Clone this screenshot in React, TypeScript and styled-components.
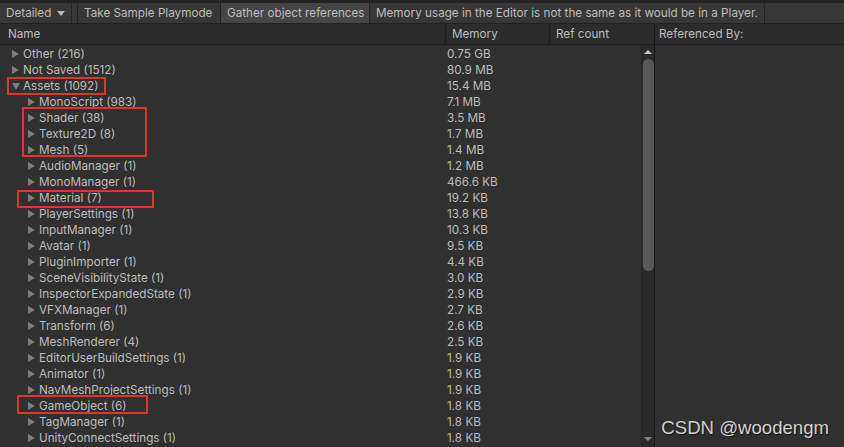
import React from "react";
import styled, { createGlobalStyle } from "styled-components";

const Global = createGlobalStyle`
  html, body { margin: 0; padding: 0; background: #303030; }
  body { font-family: Inter, "Noto Sans", sans-serif; overflow: hidden; }
  #root { width: 844px; height: 447px; }
`;

const Page = styled.div`
  position: relative;
  width: 844px;
  height: 447px;
  display: flex;
  flex-direction: column;
  background: #303030;
  color: #bcbcbc;
  font-size: 11.7px;
  overflow: hidden;
`;

const TopStrip = styled.div`
  height: 3px;
  background: #232323;
  flex: none;
`;

const Toolbar = styled.div`
  height: 20px;
  flex: none;
  display: flex;
  align-items: stretch;
  background: #373737;
  border-bottom: 1px solid #1f1f1f;
`;

const ToolButton = styled.div<{ $w: number; $active?: boolean }>`
  width: ${(p) => p.$w}px;
  flex: none;
  display: flex;
  align-items: center;
  gap: 6px;
  padding-left: 6px;
  box-sizing: border-box;
  background: ${(p) => (p.$active ? "#454545" : "#373737")};
  border-right: 1px solid #232323;
  color: #bcbcbc;
  white-space: nowrap;
`;

const Caret = styled.span`
  width: 0;
  height: 0;
  border-left: 4px solid transparent;
  border-right: 4px solid transparent;
  border-top: 5px solid #bcbcbc;
`;

const Gap = styled.div`
  width: 5px;
  flex: none;
  border-right: 1px solid #232323;
`;

const Main = styled.div`
  flex: 1;
  display: flex;
  min-height: 0;
`;

const LeftPane = styled.div`
  width: 654px;
  flex: none;
  display: flex;
  flex-direction: column;
  border-right: 1px solid #1a1a1a;
`;

const RightPane = styled.div`
  flex: 1;
  display: flex;
  flex-direction: column;
`;

const Header = styled.div`
  height: 20px;
  flex: none;
  display: flex;
  background: #2c2c2c;
  border-bottom: 1px solid #1f1f1f;
`;

const HeaderCell = styled.div<{ $w?: number; $pad?: number }>`
  ${(p) => (p.$w ? `width: ${p.$w}px; flex: none;` : "flex: 1;")}
  display: flex;
  align-items: center;
  padding-left: ${(p) => p.$pad ?? 6}px;
  box-sizing: border-box;
  border-right: 1px solid #1f1f1f;
  color: #bcbcbc;
  &:last-child { border-right: none; }
`;

const Body = styled.div`
  position: relative;
  flex: 1;
  display: flex;
  min-height: 0;
`;

const Rows = styled.div`
  flex: 1;
  display: flex;
  flex-direction: column;
  padding-top: 1px;
`;

const Row = styled.div`
  height: 16px;
  flex: none;
  display: flex;
  align-items: center;
`;

const NameCell = styled.div<{ $indent: number }>`
  width: 446px;
  flex: none;
  display: flex;
  align-items: center;
  padding-left: ${(p) => 12 + p.$indent * 16}px;
  box-sizing: border-box;
  gap: 4px;
  white-space: nowrap;
`;

const Arrow = styled.span<{ $open?: boolean }>`
  width: 0;
  height: 0;
  ${(p) =>
    p.$open
      ? `border-left: 4px solid transparent; border-right: 4px solid transparent; border-top: 7px solid #7b7b7b; margin-right: -1px;`
      : `border-top: 4px solid transparent; border-bottom: 4px solid transparent; border-left: 7px solid #7b7b7b;`}
`;

const MemCell = styled.div`
  padding-left: 1px;
  white-space: nowrap;
`;

const Scrollbar = styled.div`
  width: 13px;
  flex: none;
  display: flex;
  flex-direction: column;
  align-items: center;
  background: #2a2a2a;
  border-left: 1px solid #262626;
  box-sizing: border-box;
`;

const ScrollArrow = styled.span<{ $down?: boolean }>`
  margin-top: ${(p) => (p.$down ? "auto" : "5px")};
  margin-bottom: ${(p) => (p.$down ? "6px" : "0")};
  width: 0;
  height: 0;
  border-left: 4px solid transparent;
  border-right: 4px solid transparent;
  ${(p) => (p.$down ? "border-top: 4px solid #8a8a8a;" : "border-bottom: 4px solid #c8c8c8;")}
`;

const Thumb = styled.div`
  margin-top: 5px;
  width: 11px;
  height: 212px;
  border-radius: 6px;
  background: #585858;
`;

const Mark = styled.div`
  position: absolute;
  border: 2px solid #e8302f;
  box-sizing: border-box;
  pointer-events: none;
`;

const Watermark = styled.div`
  position: absolute;
  right: 15px;
  bottom: 8px;
  font-family: "Liberation Sans", Arial, sans-serif;
  font-size: 18.6px;
  color: #d0d0d0;
  text-shadow: 1px 1px 1px rgba(0, 0, 0, 0.6);
`;

type R = { name: string; mem: string; indent: number; open?: boolean };

const rows: R[] = [
  { name: "Other (216)", mem: "0.75 GB", indent: 0 },
  { name: "Not Saved (1512)", mem: "80.9 MB", indent: 0 },
  { name: "Assets (1092)", mem: "15.4 MB", indent: 0, open: true },
  { name: "MonoScript (983)", mem: "7.1 MB", indent: 1 },
  { name: "Shader (38)", mem: "3.5 MB", indent: 1 },
  { name: "Texture2D (8)", mem: "1.7 MB", indent: 1 },
  { name: "Mesh (5)", mem: "1.4 MB", indent: 1 },
  { name: "AudioManager (1)", mem: "1.2 MB", indent: 1 },
  { name: "MonoManager (1)", mem: "466.6 KB", indent: 1 },
  { name: "Material (7)", mem: "19.2 KB", indent: 1 },
  { name: "PlayerSettings (1)", mem: "13.8 KB", indent: 1 },
  { name: "InputManager (1)", mem: "10.3 KB", indent: 1 },
  { name: "Avatar (1)", mem: "9.5 KB", indent: 1 },
  { name: "PluginImporter (1)", mem: "4.4 KB", indent: 1 },
  { name: "SceneVisibilityState (1)", mem: "3.0 KB", indent: 1 },
  { name: "InspectorExpandedState (1)", mem: "2.9 KB", indent: 1 },
  { name: "VFXManager (1)", mem: "2.7 KB", indent: 1 },
  { name: "Transform (6)", mem: "2.6 KB", indent: 1 },
  { name: "MeshRenderer (4)", mem: "2.5 KB", indent: 1 },
  { name: "EditorUserBuildSettings (1)", mem: "1.9 KB", indent: 1 },
  { name: "Animator (1)", mem: "1.9 KB", indent: 1 },
  { name: "NavMeshProjectSettings (1)", mem: "1.9 KB", indent: 1 },
  { name: "GameObject (6)", mem: "1.8 KB", indent: 1 },
  { name: "TagManager (1)", mem: "1.8 KB", indent: 1 },
  { name: "UnityConnectSettings (1)", mem: "1.8 KB", indent: 1 },
];

// annotation boxes, relative to Body (Body top = 44px)
const marks = [
  { l: 7, t: 32, w: 99, h: 18 },
  { l: 22, t: 62, w: 125, h: 50 },
  { l: 17, t: 145, w: 137, h: 18 },
  { l: 17, t: 350, w: 131, h: 19 },
];

export default function App() {
  return (
    <Page>
      <Global />
      <TopStrip />
      <Toolbar>
        <ToolButton $w={72}>
          Detailed <Caret />
        </ToolButton>
        <Gap />
        <ToolButton $w={143}>Take Sample Playmode</ToolButton>
        <ToolButton $w={149} $active>
          Gather object references
        </ToolButton>
        <ToolButton $w={395}>
          Memory usage in the Editor is not the same as it would be in a Player.
        </ToolButton>
      </Toolbar>
      <Main>
        <LeftPane>
          <Header>
            <HeaderCell $w={446} $pad={8}>Name</HeaderCell>
            <HeaderCell $w={104}>Memory</HeaderCell>
            <HeaderCell>Ref count</HeaderCell>
          </Header>
          <Body>
            <Rows>
              {rows.map((r) => (
                <Row key={r.name}>
                  <NameCell $indent={r.indent}>
                    <Arrow $open={r.open} />
                    {r.name}
                  </NameCell>
                  <MemCell>{r.mem}</MemCell>
                </Row>
              ))}
            </Rows>
            <Scrollbar>
              <ScrollArrow />
              <Thumb />
              <ScrollArrow $down />
            </Scrollbar>
            {marks.map((m, i) => (
              <Mark
                key={i}
                style={{ left: m.l, top: m.t, width: m.w, height: m.h }}
              />
            ))}
          </Body>
        </LeftPane>
        <RightPane>
          <Header>
            <HeaderCell $pad={4}>Referenced By:</HeaderCell>
          </Header>
        </RightPane>
      </Main>
      <Watermark>CSDN @woodengm</Watermark>
    </Page>
  );
}
